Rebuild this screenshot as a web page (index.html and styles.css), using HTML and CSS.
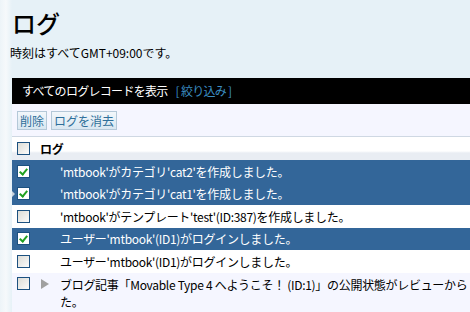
FILE: index.html
```html
<!DOCTYPE html>
<html>

<head>
    <title>ログ</title>
    <link rel="stylesheet" href="styles.css">
</head>

<body>
    <div class="page">
        <h1 class="page-title">ログ</h1>
        <p class="page-note">時刻はすべてGMT+09:00です。</p>

        <div class="listing">
            <div class="listing-bar">
                すべてのログレコードを表示 <a href="#" class="filter-link">[ 絞り込み ]</a>
            </div>
            <div class="actions">
                <button class="btn">削除</button>
                <button class="btn">ログを消去</button>
            </div>
            <table class="log-table">
                <thead>
                    <tr>
                        <th class="cb-col"><span class="cb"></span></th>
                        <th class="log-col" colspan="2">ログ</th>
                    </tr>
                </thead>
                <tbody>
                    <tr class="selected">
                        <td class="cb-col"><span class="cb checked"></span></td>
                        <td class="arrow-col"></td>
                        <td>'mtbook'がカテゴリ'cat2'を作成しました。</td>
                    </tr>
                    <tr class="selected">
                        <td class="cb-col"><span class="notch"></span><span class="cb checked"></span></td>
                        <td class="arrow-col"></td>
                        <td>'mtbook'がカテゴリ'cat1'を作成しました。</td>
                    </tr>
                    <tr>
                        <td class="cb-col"><span class="cb"></span></td>
                        <td class="arrow-col"></td>
                        <td>'mtbook'がテンプレート'test'(ID:387)を作成しました。</td>
                    </tr>
                    <tr class="selected">
                        <td class="cb-col"><span class="cb checked"></span></td>
                        <td class="arrow-col"></td>
                        <td>ユーザー'mtbook'(ID1)がログインしました。</td>
                    </tr>
                    <tr>
                        <td class="cb-col"><span class="cb"></span></td>
                        <td class="arrow-col"></td>
                        <td>ユーザー'mtbook'(ID1)がログインしました。</td>
                    </tr>
                    <tr class="odd">
                        <td class="cb-col"><span class="cb"></span></td>
                        <td class="arrow-col"><span class="arrow"></span></td>
                        <td class="wrap-cell">ブログ記事「Movable Type 4 へようこそ！ (ID:1)」の公開状態がレビューから<br>た。</td>
                    </tr>
                </tbody>
            </table>
        </div>
    </div>
</body>

</html>
```

FILE: styles.css
```css
/* Basic styling */
body {
    margin: 0;
    font-family: "Noto Sans CJK JP", "DejaVu Sans", sans-serif;
    font-size: 12px;
    color: #000;
    background: #e6f1f7;
    overflow: hidden;
}

.page {
    padding: 8px 0 0 12px;
    background: linear-gradient(to right, #edf4f8 0, #f6f9fb 6px, #e6f1f7 12px);
    min-height: 312px;
    box-sizing: border-box;
}

.page-title {
    margin: 0 0 0 0;
    font-size: 24px;
    font-weight: 500;
    line-height: 30px;
}

.page-note {
    margin: 8px 0 0 -2px;
    font-size: 12px;
    line-height: 14px;
}

.listing {
    margin-top: 18px;
    width: 470px;
}

/* Black header bar */
.listing-bar {
    background: #000;
    color: #fff;
    height: 26px;
    line-height: 26px;
    padding-left: 10px;
    letter-spacing: -0.7px;
}

.filter-link {
    color: #3b8ec2;
    text-decoration: none;
    margin-left: 6px;
}

/* Action buttons */
.actions {
    background: #f5f6ff;
    height: 32px;
    display: flex;
    align-items: center;
    gap: 4px;
    padding-left: 5px;
    border-bottom: 1px solid #cfd8e3;
}

.btn {
    font-family: inherit;
    font-size: 12px;
    color: #2e6f9a;
    background: linear-gradient(#f2f7fb, #d9e7f1);
    border: 1px solid #b4c8d8;
    height: 19px;
    line-height: 15px;
    padding: 0 2px;
    margin: 0;
}

/* Log table */
.log-table {
    width: 100%;
    border-collapse: collapse;
    letter-spacing: -0.3px;
}

.log-table th,
.log-table td {
    padding: 0;
    height: 22.5px;
    vertical-align: middle;
    text-align: left;
}

.log-table thead th {
    height: 23px;
    background: linear-gradient(#fff 0, #fff 14px, #e9edf3 16px, #e9edf3 23px);
    font-weight: bold;
}

.log-table .cb-col {
    width: 23px;
    padding-left: 5px;
    position: relative;
}

.log-table .arrow-col {
    width: 20px;
}

.log-table tbody tr {
    background: #fff;
}

.log-table tr.selected {
    background: #336699;
    color: #fff;
}

.log-table tr.odd {
    background: #f5f6ff;
}

.log-table tr.odd td {
    vertical-align: top;
    padding-top: 3px;
    line-height: 17px;
    height: 37px;
}

.log-table tr.odd td.cb-col,
.log-table tr.odd td.arrow-col {
    padding-top: 4px;
}

/* Checkbox */
.cb {
    display: block;
    width: 11px;
    height: 11px;
    border: 1px solid #1c5180;
    background: linear-gradient(135deg, #dcdcd6, #fbfbfb);
    position: relative;
}

.cb.checked {
    background: #fff;
}

.cb.checked::after {
    content: "";
    position: absolute;
    left: 3px;
    top: 1px;
    width: 3px;
    height: 6px;
    border: solid #21a121;
    border-width: 0 2px 2px 0;
    transform: rotate(40deg);
}

.notch {
    position: absolute;
    left: 0;
    top: 8px;
    border-left: 3px solid #c8d2dc;
    border-top: 3px solid transparent;
    border-bottom: 3px solid transparent;
}

.arrow {
    display: block;
    margin: 2px 0 0 1px;
    width: 0;
    height: 0;
    border-left: 8px solid #a0a0a0;
    border-top: 5px solid transparent;
    border-bottom: 5px solid transparent;
}
```
